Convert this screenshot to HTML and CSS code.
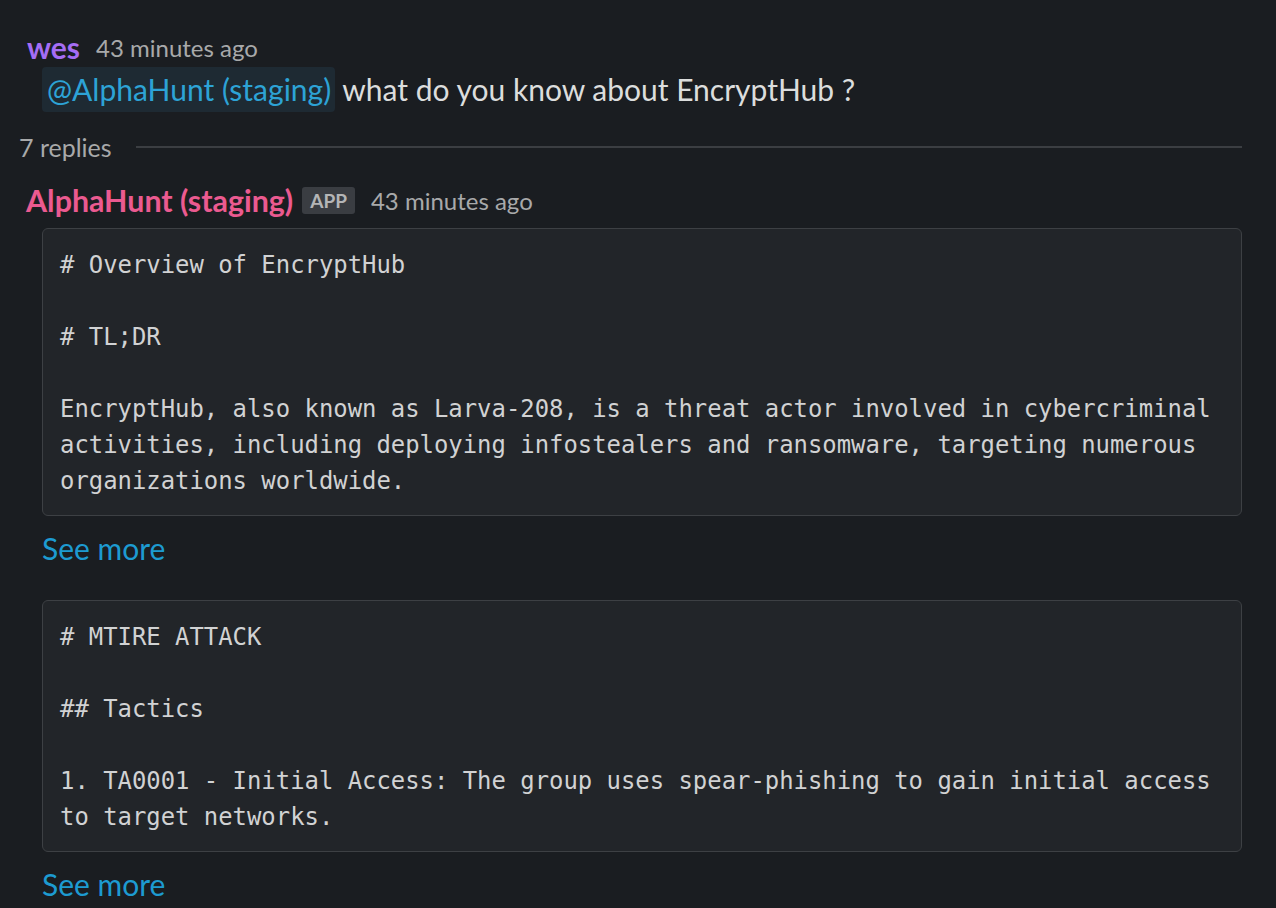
FILE: index.html
```html
<!DOCTYPE html>
<html>
<head>
<meta charset="utf-8">
<link rel="stylesheet" href="styles.css">
</head>
<body>
<div class="thread">
  <div class="msg parent">
    <div class="msg-head">
      <span class="name name-wes">wes</span>
      <span class="time">43 minutes ago</span>
    </div>
    <div class="msg-text"><span class="mention">@AlphaHunt (staging)</span> what do you know about EncryptHub ?</div>
  </div>
  <div class="replies">
    <span class="replies-count">7 replies</span>
    <span class="replies-line"></span>
  </div>
  <div class="msg reply">
    <div class="msg-head">
      <span class="name name-bot">AlphaHunt (staging)</span>
      <span class="badge">APP</span>
      <span class="time">43 minutes ago</span>
    </div>
    <div class="body">
      <pre class="code"># Overview of EncryptHub

# TL;DR

EncryptHub, also known as Larva-208, is a threat actor involved in cybercriminal
activities, including deploying infostealers and ransomware, targeting numerous
organizations worldwide.</pre>
      <a class="see-more">See more</a>
      <pre class="code"># MTIRE ATTACK

## Tactics

1. TA0001 - Initial Access: The group uses spear-phishing to gain initial access
to target networks.</pre>
      <a class="see-more">See more</a>
    </div>
  </div>
</div>
</body>
</html>
```
FILE: styles.css
```css
html, body {
  margin: 0;
  padding: 0;
  background: #1a1d21;
  height: 100%;
  overflow: hidden;
}
body {
  font-family: Lato, "Noto Sans", sans-serif;
  color: #d1d2d3;
}
.thread {
  padding: 28px 34px 0 19px;
}
.msg-head {
  display: flex;
  align-items: center;
  height: 36px;
}
.parent .msg-head {
  padding-left: 8px;
  height: 38px;
}
.name {
  font-weight: 700;
  font-size: 30px;
  line-height: 36px;
}
.name-wes {
  color: #a56df5;
}
.name-bot {
  color: #eb5a90;
  font-size: 30.4px;
}
.time {
  color: #a8a9aa;
  font-size: 24px;
  margin-left: 16px;
}
.badge {
  margin-left: 9px;
  background: #3a3d42;
  color: #b4b5b6;
  font-size: 19px;
  font-weight: 700;
  line-height: 27px;
  padding: 0 8px;
  border-radius: 3px;
}
.msg-text {
  font-size: 30px;
  line-height: 46px;
  padding-left: 23px;
  color: #dcdddd;
}
.mention {
  display: inline-block;
  background: #1e2a33;
  color: #2da3d6;
  border-radius: 4px;
  padding: 0 4px 0 5px;
  line-height: 45px;
}
.replies {
  display: flex;
  align-items: center;
  height: 36px;
  margin-top: 17px;
}
.replies-count {
  color: #a8a9aa;
  font-size: 25px;
}
.replies-line {
  flex: 1;
  height: 2px;
  background: #3b3e42;
  margin-left: 24px;
}
.reply {
  margin-top: 17px;
  padding-left: 7px;
}
.body {
  padding-left: 16px;
  padding-top: 10px;
}
.code {
  margin: 0 0 12px 0;
  background: #222529;
  border: 1px solid #3d4044;
  border-radius: 6px;
  padding: 18px 17px 16px;
  font-family: "DejaVu Sans Mono", monospace;
  font-size: 23.9px;
  line-height: 36px;
  color: #d1d2d3;
  white-space: pre;
  overflow: hidden;
}
.see-more {
  display: block;
  color: #1d9bd1;
  font-size: 30px;
  line-height: 40px;
  margin-bottom: 32px;
}
```
